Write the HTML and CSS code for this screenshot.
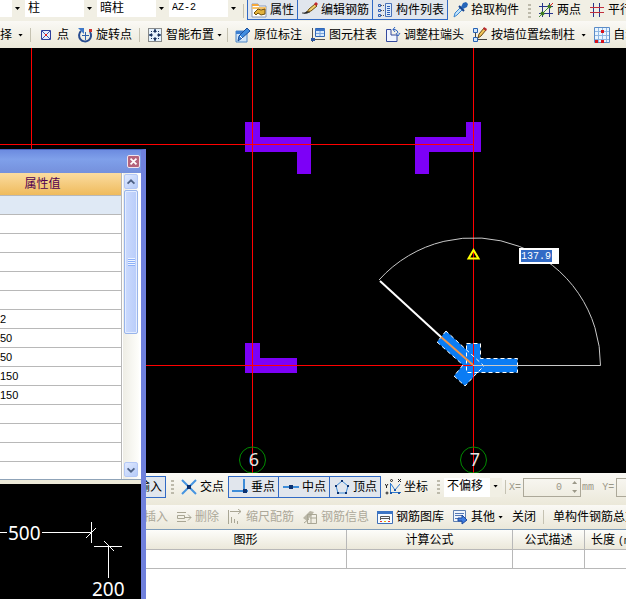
FILE: index.html
```
<!doctype html>
<html lang="zh">
<head>
    <title>绘图</title>
    <meta charset="utf-8">
    <meta name="viewport" content="width=device-width,initial-scale=1">
    <link rel="stylesheet" href="styles.css">
</head>
<body>
    <div class="toolbar top_bar">
        <div class="combo short"><select aria-label="楼层"><option></option></select></div>
        <div class="combo"><select aria-label="构件类型"><option>柱</option></select></div>
        <div class="combo"><select aria-label="构件"><option>暗柱</option></select></div>
        <div class="combo latin"><select aria-label="名称"><option>AZ-2</option></select></div>
        <span class="sep"></span>
        <button class="tool on"><svg class="icon" viewBox="0 0 16 16"><path d="M1 2h6l1 2h7v11H1z" fill="#fff" stroke="#8c9bb8"/><path d="M1 2h6l1 2H1z" fill="#f5a83c"/><path d="M1 5h14v2H1z" fill="#f9c46a"/><path d="M3 11l4-4 3 1 4-1v5l-4 1-3-2-2 2z" fill="#e3b23c" stroke="#6e4f0e"/></svg>属性</button>
        <button class="tool on"><svg class="icon" viewBox="0 0 16 16"><path d="M0 11h5l3-1" stroke="#444" fill="none"/><path d="M5 10l2-3 6-5 2 2-6 5z" fill="#f0cf6c" stroke="#6e4f0e"/><path d="M12 2l2-2 2 2-2 2z" fill="#c1272d"/><path d="M1 12l4-3 1 2z" fill="#222"/></svg>编辑钢筋</button>
        <button class="tool on"><svg class="icon" viewBox="0 0 16 16"><path d="M1.500 2.500h2v2h-2zM1.500 7.500h2v2h-2zM1.500 12.500h2v2h-2z" fill="none" stroke="#2f5fb5"/><path d="M4 3.500h3M4 8.500h3M4 13.500h3" stroke="#555" stroke-dasharray="1 1"/><path d="M8.500 1.500h6v13h-6z" fill="#dcebfb" stroke="#4a72b8"/><path d="M10 4.500h3M10 6.500h3M10 8.500h3M10 10.500h3M10 12.500h3" stroke="#2f5fb5"/></svg>构件列表</button>
        <button class="tool"><svg class="icon" viewBox="0 0 16 16"><path d="M2 15l1-4 6-6 2 2-6 6z" fill="#bfe2fb" stroke="#3b86cf"/><path d="M7 4l5 5" stroke="#16408c" stroke-width="2"/><path d="M9 5l2-4 3-1 2 2-1 3-4 2z" fill="#2766b8"/></svg>拾取构件</button>
        <span class="grip"></span>
        <button class="tool"><svg class="icon" viewBox="0 0 16 16"><path d="M4.500 1v14M11.500 1v14M1 4.500h14M1 11.500h14" stroke="#27358c"/><path d="M1 15L15 1" stroke="#3d8a33"/><circle cx="4.500" cy="11.500" r="2" fill="#3f7d20"/><circle cx="11.500" cy="4.500" r="2" fill="#3f7d20"/><path d="M12 4l3-3" stroke="#d22"/></svg>两点</button>
        <button class="tool"><svg class="icon" viewBox="0 0 16 16"><path d="M4.500 1v14M10.500 1v14" stroke="#27358c"/><path d="M1 5.500h14M1 10.500h14" stroke="#c22f3c"/></svg>平行</button>
    </div>
    <div class="toolbar draw_bar">
        <button class="tool cut">择<i class="caret"></i></button>
        <span class="sep"></span>
        <button class="tool"><svg class="icon" viewBox="0 0 16 16"><path d="M3.500 3.500h9v9h-9z" fill="#e6ecfb" stroke="#2d3f9c"/><path d="M4 4l8 8M12 4l-8 8" stroke="#4456b0"/><path d="M7 7h2v2H7z" fill="#e02020"/></svg>点</button>
        <button class="tool"><svg class="icon" viewBox="0 0 16 16"><path d="M4 4a6 6 0 1 0 9 1" fill="none" stroke="#274b8f" stroke-width="2"/><path d="M1 1h6v6z" fill="#3f78c8"/><path d="M8.500 5v8M5 8.500h7" stroke="#2f62ac"/><path d="M12 2h3v3h-3z" fill="#c83232"/></svg>旋转点</button>
        <span class="sep"></span>
        <button class="tool drop"><svg class="icon" viewBox="0 0 16 16"><path d="M1.500 1.500h13v13h-13z" fill="#e4f1fc" stroke="#222" stroke-dasharray="1 1"/><path d="M8 2v4M8 10v4M2 8h4M10 8h4" stroke="#16305e"/><path d="M8 2L6 5h4zM8 14l-2-3h4zM2 8l3-2v4zM14 8l-3-2v4z" fill="#16305e"/><path d="M4 4h1v1H4zM11 4h1v1h-1zM4 11h1v1H4zM11 11h1v1h-1z" fill="#16305e"/></svg>智能布置<i class="caret"></i></button>
        <span class="sep"></span>
        <button class="tool"><svg class="icon" viewBox="0 0 16 16"><path d="M1 4h11v11H1z" fill="#cfe4f8" stroke="#4b86c8"/><path d="M1 4h11v3H1z" fill="#3c7fd0"/><path d="M3 14l1-5 8-8 3 3-8 7z" fill="#3f8de0" stroke="#1c4f9c"/><path d="M5 9l3 3" stroke="#fff"/></svg>原位标注</button>
        <button class="tool"><svg class="icon" viewBox="0 0 16 16"><path d="M5.500 1.500h9v8h-9z" fill="#d7e9fb" stroke="#2f67b8"/><path d="M5 2h10v2H5z" fill="#3c74c6"/><path d="M6 6.500h8M10 4v5" stroke="#7ba4dc"/><path d="M2.500 1v14M1 12.500h14" stroke="#555"/><path d="M1 11h4v3H1z" fill="#2b57a5"/></svg>图元柱表</button>
        <button class="tool"><svg class="icon" viewBox="0 0 16 16"><path d="M1.500 2.500H6V8h6v6.500H1.500z" fill="#f0f5ff" stroke="#344a9e"/><path d="M8 2.500h2a4 4 0 0 1 3 4M11 6l2 3 2-3M10 0L8 2.500 10 5" fill="none" stroke="#3064c0"/></svg>调整柱端头</button>
        <button class="tool cut_caret"><svg class="icon" viewBox="0 0 16 16"><path d="M1.500 1.500h4v4h-4zM1.500 10.500h4v4h-4z" fill="#cfe6fb" stroke="#2862b4"/><path d="M3.500 6v4M6 12.500h9" stroke="#444"/><path d="M6 11l1-4 5-6 2 2-5 6z" fill="#f2c55a" stroke="#6a4a12"/><path d="M12 0l3 2-1 2-3-2z" fill="#b8292f"/></svg>按墙位置绘制柱<i class="caret"></i></button>
        <button class="tool"><svg class="icon" viewBox="0 0 16 16"><path d="M.5.5h15v15H.5z" fill="#eaf5fe" stroke="#5b8cc8"/><path d="M4.500 1v14M8.500 1v14M12.500 1v14M1 4.500h14M1 8.500h14M1 12.500h14" stroke="#8fb6e2"/><path d="M7 3h3v3H7zM1 13h3v3H1zM7 13h3v3H7z" fill="#d8141c"/></svg>自动</button>
    </div>

    <div class="workspace">
        <svg class="drawing" width="626" height="425" viewBox="0 48 626 425">
            <g fill="#7d00f7">
                <path d="M245 122h15v15h51v37h-14v-22h-52z"/>
                <path d="M466 122h15v30h-52v22h-14v-37h51z"/>
                <path d="M245 343h15v15h37v15h-52z"/>
            </g>
            <g fill="#0a7cf4">
                <path d="M466.500 343.500h14v15h37v14h-51z"/>
                <path d="M446 331L437 342L463 365L454 376L465 386L476 374L484 366z"/>
            </g>
            <!-- axis net -->
            <path d="M31.500 48v110M252.500 48v425M473.500 48v425M0 144.500h474M0 365.500h474" stroke="#f00" fill="none"/>
            <g fill="none" stroke="#fff" stroke-dasharray="4 3">
                <path d="M466.500 343.500h14v15h37v14h-51z"/>
                <path d="M446 331L437 342L463 365L454 376L465 386L476 374L484 366z"/>
            </g>
            <path d="M379 280A127 127 0 0 1 600.500 365.500H473" fill="none" stroke="#c8c8c8"/>
            <path d="M380 281L441 337" stroke="#fff" stroke-width="2"/>
            <path d="M441 337L473 365" stroke="#f0954a" stroke-width="2"/>
            <path d="M473.500 250l-5 8.500h10z" fill="none" stroke="#ff0" stroke-width="2"/>
            <g fill="none" stroke="#008a00">
                <circle cx="252.500" cy="460" r="13"/>
                <circle cx="473.500" cy="460" r="13"/>
            </g>
            <text class="axis_name" x="254" y="466">6</text>
            <text class="axis_name" x="475" y="466">7</text>
        </svg>
        <input class="angle" aria-label="角度" value="137.9">
    </div>

    <div class="dock">
        <div class="toolbar snap_bar">
            <button class="tool on">输入</button>
            <span class="grip"></span>
            <button class="tool"><svg class="icon" viewBox="0 0 16 16"><path d="M1 1l14 14M15 1L1 15" stroke="#4795e0" stroke-width="2"/><path d="M6 6h4v4H6z" fill="#0d3270"/></svg>交点</button>
            <button class="tool on"><svg class="icon" viewBox="0 0 16 16"><path d="M0 12h16M12 0v12" stroke="#3d8cd8" stroke-width="2"/><path d="M11 10h4v4h-4z" fill="#0d3270"/></svg>垂点</button>
            <button class="tool on"><svg class="icon" viewBox="0 0 16 16"><path d="M0 8h16" stroke="#3d8cd8" stroke-width="2"/><path d="M6 6h4v4H6z" fill="#0d3270"/></svg>中点</button>
            <button class="tool on"><svg class="icon" viewBox="0 0 16 16"><path d="M8 2l6 5-2 7H4L2 7z" fill="none" stroke="#3d8cd8"/><path d="M7 1h2v2H7zM1 6h2v2H1zM13 6h2v2h-2zM3 13h2v2H3zM11 13h2v2h-2z" fill="#0d3270"/></svg>顶点</button>
            <button class="tool"><svg class="icon" viewBox="0 0 16 16"><path d="M5.500 4v9.500H16M6 5l4 6 5-6" fill="none" stroke="#2f7bd0"/><path d="M0 5l1.500 2L3 5M1.500 7v2M13 0l3 3M16 0l-3 3" fill="none" stroke="#222"/><circle cx="6.500" cy="1.500" r="1" fill="none" stroke="#222"/><circle cx="2" cy="14" r="1" fill="none" stroke="#222"/><path d="M9 10h2v2H9zM5 13h2v2H5zM13 13h2v2h-2z" fill="#1c55a8"/></svg>坐标</button>
            <span class="grip"></span>
            <div class="combo offset"><select aria-label="偏移方式"><option>不偏移</option></select></div>
            <span class="sep"></span>
            <label class="coord"><span>X=</span><input value="0" disabled><span class="spin"><i></i><i></i></span><span>mm</span></label>
            <label class="coord"><span>Y=</span><input value="0" disabled><span class="spin"><i></i><i></i></span><span>mm</span></label>
        </div>
        <div class="toolbar rebar_bar">
            <button class="tool" disabled>插入</button>
            <button class="tool" disabled><svg class="icon" viewBox="0 0 16 16"><path d="M1 3.500h9M1 12.500h9M1.500 6.500h7v3h-7zM9 8.500h6M12 5.500l3 3-3 3" fill="none" stroke="#a9a694"/></svg>删除</button>
            <button class="tool" disabled><svg class="icon" viewBox="0 0 16 16"><path d="M1.500 1v14M3 2.500h11M11 0l3 2.500L11 5M4.500 8v6M7.500 10v4M10.500 12v3" fill="none" stroke="#a9a694"/></svg>缩尺配筋</button>
            <button class="tool" disabled><svg class="icon" viewBox="0 0 16 16"><path d="M1 9l7-7 4 1-7 9z" fill="#b9b6a6"/><path d="M5.500 5.500h9v9h-9zM8 9h6M9 6v8M2 14l5-4" fill="none" stroke="#a9a694"/></svg>钢筋信息</button>
            <button class="tool"><svg class="icon" viewBox="0 0 16 16"><path d="M.5 2.500h15v12H.5z" fill="#f6fbff" stroke="#3f6fb6"/><path d="M0 2h16v3H0z" fill="#3b74c4"/><path d="M3.500 11V7.500h9V11M4 9.500h9" fill="none" stroke="#555"/><path d="M3 12h2v1H3z" fill="#e33"/><path d="M7 12h2v1H7z" fill="#e8b800"/><path d="M11 12h2v1h-2z" fill="#e33"/></svg>钢筋图库</button>
            <button class="tool more"><svg class="icon" viewBox="0 0 16 16"><path d="M1.500 1.500h12v9l-3 2h-9z" fill="#eef4fc" stroke="#6080b0"/><path d="M3 4.500h9M3 6.500h7M3 9.500h4" stroke="#5478b4"/><path d="M6 9h4V6l5 5-5 4v-3H6z" fill="#3f7de0" stroke="#1c489c"/></svg>其他<i class="caret"></i></button>
            <button class="tool">关闭</button>
            <span class="sep"></span>
            <button class="tool">单构件钢筋总重</button>
        </div>
        <table class="rebar_list">
            <tr><th class="c_shape">图形</th><th class="c_formula">计算公式</th><th class="c_desc">公式描述</th><th class="c_len">长度<span>(mm)</span></th></tr>
            <tr><td></td><td></td><td></td><td></td></tr>
        </table>
    </div>

    <!-- property window -->
    <div class="palette">
        <div class="title"><button class="close" aria-label="关闭"><svg viewBox="0 0 13 13"><path d="M3 3l7 7M10 3l-7 7" stroke="#fff" stroke-width="2"/></svg></button></div>
        <div class="props">
            <table class="values">
                <tr><th>属性值</th></tr>
                <tr class="picked"><td></td></tr>
                <tr><td></td></tr>
                <tr><td></td></tr>
                <tr><td></td></tr>
                <tr><td></td></tr>
                <tr><td></td></tr>
                <tr><td>2</td></tr>
                <tr><td>50</td></tr>
                <tr><td>50</td></tr>
                <tr><td>150</td></tr>
                <tr><td>150</td></tr>
                <tr><td></td></tr>
                <tr><td></td></tr>
                <tr><td></td></tr>
                <tr><td></td></tr>
            </table>
            <div class="scroll">
                <button class="arrow" aria-label="上"><svg viewBox="0 0 14 14"><path d="M3 9l4-4 4 4" fill="none" stroke="#4d6185" stroke-width="2"/></svg></button>
                <div class="thumb"><i></i></div>
                <button class="arrow" aria-label="下"><svg viewBox="0 0 14 14"><path d="M3 5l4 4 4-4" fill="none" stroke="#4d6185" stroke-width="2"/></svg></button>
            </div>
        </div>
        <div class="preview">
            <svg width="141" height="115" viewBox="0 484 141 115">
                <path d="M0 532.500h7M42 532.500h49M91.500 522v21M86 538l10-10M94 546.500h28M108.500 547v31M104 541l10 10" stroke="#fff" fill="none"/>
                <text x="8" y="540">500</text>
                <text x="92" y="596">200</text>
            </svg>
        </div>
    </div>
</body>
</html>
```

FILE: styles.css
```
*{
    box-sizing: border-box;
}
body{
    margin: 0;
    height: 100vh;
    display: flex;
    flex-direction: column;
    position: relative;
    overflow: hidden;
    background-color: #000;
    color: #000;
    font: 12px/16px "Liberation Sans", "Noto Sans CJK SC", sans-serif;
    user-select: none;
}
button, select, input{
    font: inherit;
    color: inherit;
    margin: 0;
}

/* toolbars */
.toolbar{
    display: flex;
    flex: none;
    align-items: center;
    overflow: hidden;
    white-space: nowrap;
    background: linear-gradient(#faf9f5, #ebe8d9);
}
.top_bar{
    height: 21px;
    align-items: flex-start;
    background: #f1efe4;
}
.draw_bar{
    height: 27px;
    padding-top: 1px;
}
.tool{
    display: flex;
    flex: none;
    align-items: center;
    gap: 3px;
    height: 22px;
    padding: 0 3px;
    border: 1px solid transparent;
    background: none;
}
.top_bar .tool{
    height: 20px;
    border-top: 0;
}
.tool:disabled{
    color: #aca899;
}
.on{
    border-color: #316ac5;
    background-color: #e1e6ed;
}
.on + .on{
    margin-left: -1px;
    padding-left: 4px;
}
.icon{
    width: 16px;
    height: 16px;
}
.caret{
    width: 5px;
    height: 3px;
    background-color: #000;
    clip-path: polygon(0 0, 100% 0, 50% 100%);
}
.drop{
    padding-right: 1px;
}
.cut{
    padding-left: 0;
    border-left: 0;
}
.cut .caret, .cut_caret .caret{
    margin-left: 3px;
}
.sep{
    flex: none;
    align-self: center;
    width: 1px;
    height: 14px;
    margin: 0 3px;
    background-color: #c5c2b2;
}
.grip{
    flex: none;
    align-self: center;
    width: 3px;
    height: 14px;
    margin: 0 3px 0 5px;
    background: repeating-linear-gradient(#bdbaab 0 2px, transparent 2px 4px);
}
.combo{
    display: flex;
    flex: none;
    position: relative;
    width: 71px;
    height: 17px;
    margin-left: 1px;
    background-color: #fff;
}
.combo select{
    appearance: none;
    width: 100%;
    height: 100%;
    padding: 0 0 2px 3px;
    border: 0;
    background: linear-gradient(#f1efe4, #f1efe4) right / 12px 100% no-repeat;
}
.combo::after{
    content: "";
    position: absolute;
    right: 4px;
    top: 7px;
    width: 5px;
    height: 3px;
    background-color: #000;
    clip-path: polygon(0 0, 100% 0, 50% 100%);
}
.short{
    width: 24px;
    margin-left: 0;
}
.latin select{
    font: 10px/16px "Liberation Mono", monospace;
}

/* drawing area */
.workspace{
    flex: 1;
    min-height: 0;
    position: relative;
    overflow: hidden;
}
.drawing{
    display: block;
}
.axis_name{
    fill: #e4e4e4;
    font: 18px "Noto Sans", sans-serif;
    text-anchor: middle;
}
.angle{
    position: absolute;
    left: 519px;
    top: 200px;
    width: 40px;
    height: 16px;
    padding: 0 2px;
    border: 0;
    color: #fff;
    font: 10px "Liberation Mono", monospace;
    background: linear-gradient(#316ac5, #316ac5) 2px 2px / 31px 12px no-repeat #fff;
}

/* bottom */
.dock{
    flex: none;
    height: 126px;
    overflow: hidden;
    background-color: #fff;
}
.snap_bar{
    height: 32px;
    padding: 3px 0 7px 134px;
}
.rebar_bar{
    height: 24px;
    padding-left: 140px;
}
.more{
    padding-right: 4px;
}
.rebar_bar .sep{
    margin-right: 5px;
}
.offset{
    width: 58px;
    height: 19px;
}
.coord{
    display: flex;
    flex: none;
    align-items: center;
    position: relative;
    margin-right: 8px;
    color: #9b9888;
    font: 10px "Liberation Mono", monospace;
}
.coord input{
    width: 58px;
    height: 19px;
    margin: 0 1px 0 2px;
    padding: 0 18px 0 2px;
    border: 1px solid #aca899;
    background: none;
    text-align: right;
}
.spin{
    position: absolute;
    right: 17px;
    display: flex;
    flex-direction: column;
    gap: 6px;
}
.spin i{
    width: 5px;
    height: 3px;
    background-color: #9b9888;
    clip-path: polygon(50% 0, 100% 100%, 0 100%);
}
.spin i + i{
    clip-path: polygon(0 0, 100% 0, 50% 100%);
}
.rebar_list{
    width: calc(100% - 100px);
    margin-left: 145px;
    border-collapse: separate;
    border-spacing: 0;
    table-layout: fixed;
    border-top: 1px solid #7f9db9;
}
.rebar_list th, .rebar_list td{
    height: 19px;
    padding: 0;
    border-right: 1px solid #b8b8b8;
    border-bottom: 1px solid #b8b8b8;
    font-weight: normal;
}
.rebar_list th{
    height: 20px;
    background: linear-gradient(#fdfdfa, #ebe8da);
}
.rebar_list .c_shape{ width: 202px; }
.rebar_list .c_formula{ width: 166px; }
.rebar_list .c_desc{ width: 72px; }
.rebar_list .c_len{
    padding-left: 6px;
    text-align: left;
    white-space: nowrap;
    overflow: hidden;
}
.c_len span{
    margin-left: 3px;
    font: 10px "Liberation Mono", monospace;
}

/* property window */
.palette{
    position: absolute;
    left: 0;
    top: 149px;
    bottom: 0;
    width: 146px;
    display: flex;
    flex-direction: column;
    border-top: 1px solid #4a63c0;
    border-right: 5px solid #6f80dc;
    background-color: #ece9d8;
}
.title{
    display: flex;
    flex: none;
    justify-content: flex-end;
    align-items: center;
    height: 23px;
    padding-right: 1px;
    background: linear-gradient(#6c8be0, #7fa0ea 40%, #7590dc);
}
.close{
    width: 13px;
    height: 13px;
    padding: 0;
    border: 1px solid #f0e4ee;
    border-radius: 2px;
    background-color: #b5637c;
}
.close svg, .arrow svg{
    display: block;
    width: 100%;
}
.props{
    display: flex;
    flex: none;
    height: 307px;
    overflow: hidden;
    border-bottom: 1px solid #8fa3b8;
    background-color: #fff;
}
.values{
    width: 122px;
    height: 308px;
    border-collapse: separate;
    border-spacing: 0;
}
.values th, .values td{
    height: 19px;
    padding: 0;
    border-right: 1px solid #b8b8b8;
    border-bottom: 1px solid #b8b8b8;
    font-size: 11px;
    line-height: 16px;
}
.values th{
    height: 23px;
    padding-right: 36px;
    color: #500050;
    font-size: 12px;
    font-weight: normal;
    background: linear-gradient(#fbdca0, #efbb5c);
}
.picked td{
    background-color: #dfe9f5;
}
.scroll{
    display: flex;
    flex-direction: column;
    width: 16px;
    margin-left: 1px;
    padding: 1px 1px 2px;
    background: linear-gradient(90deg, #eeede5, #fefefb);
}
.arrow{
    flex: none;
    width: 14px;
    height: 15px;
    padding: 0;
    border: 1px solid #b4c8f6;
    border-radius: 2px;
    background: linear-gradient(135deg, #e0e9ff, #b5cbf8);
}
.thumb{
    height: 144px;
    margin: 1px 0 auto;
    display: flex;
    align-items: center;
    justify-content: center;
    border: 1px solid #98b4ea;
    border-radius: 2px;
    background: linear-gradient(90deg, #cbdafd, #b9cdfa);
    box-shadow: inset 0 0 0 1px #e4edff;
}
.thumb i{
    width: 7px;
    height: 8px;
    background: repeating-linear-gradient(#eef4ff 0 1px, #8cb0f8 1px 2px);
}
.preview{
    flex: 1;
    margin-top: 4px;
    overflow: hidden;
    background-color: #000;
}
.preview svg{
    display: block;
}
.preview text{
    fill: #fff;
    font: 19px "Noto Sans", sans-serif;
}
```
